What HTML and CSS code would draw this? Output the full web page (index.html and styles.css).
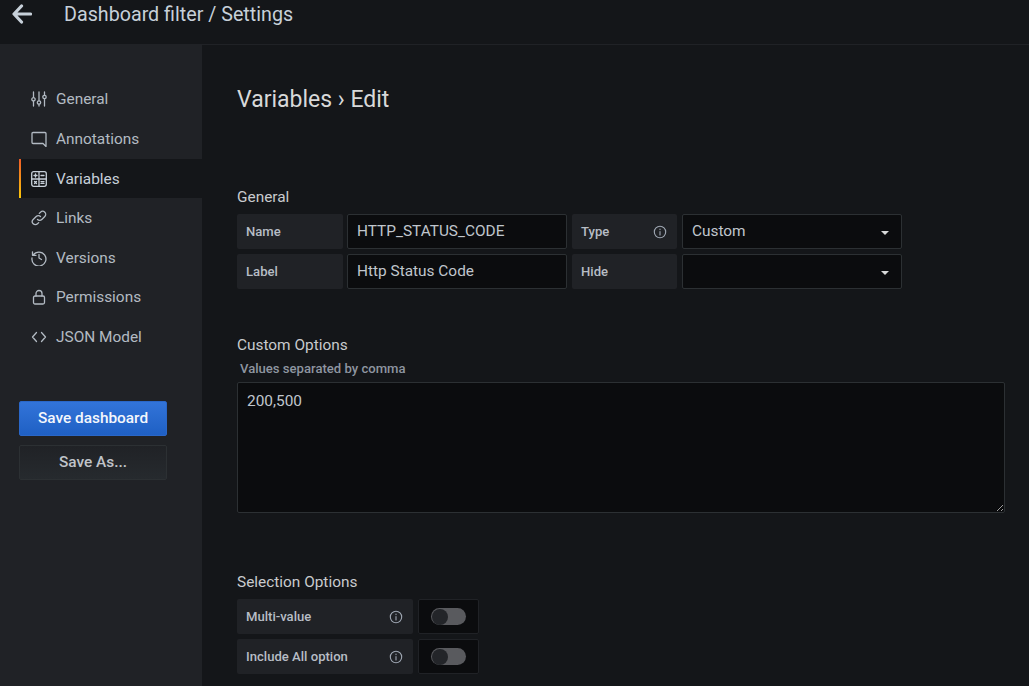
FILE: index.html
```html
<!DOCTYPE html>
<html lang="en">
<head>
<meta charset="utf-8">
<title>Dashboard filter / Settings</title>
<link rel="stylesheet" href="styles.css">
</head>
<body>
<header class="topbar">
  <svg class="back" viewBox="0 0 20 20" width="20" height="20"><path d="M18.500 10H3M9.500 2 2 10l7.500 8" fill="none" stroke="#c7d0d9" stroke-width="3.200" stroke-linecap="round" stroke-linejoin="round"/></svg>
  <h1 class="crumb">Dashboard filter / Settings</h1>
</header>
<div class="layout">
  <aside class="sidebar">
    <nav class="nav">
      <a class="nav-item"><svg class="nav-icon" viewBox="0 0 16 16"><path d="M2.500 1v5M2.500 10.500V15M8 1v8.500M8 13.500V15M13.500 1v3M13.500 8v7" /><circle cx="2.500" cy="8.300" r="1.700"/><circle cx="8" cy="11.500" r="1.700"/><circle cx="13.500" cy="6" r="1.700"/></svg>General</a>
      <a class="nav-item"><svg class="nav-icon" viewBox="0 0 16 16"><path d="M2 1.500h12a1 1 0 0 1 1 1v13l-3-3H2a1 1 0 0 1-1-1v-9a1 1 0 0 1 1-1z"/></svg>Annotations</a>
      <a class="nav-item active"><svg class="nav-icon" viewBox="0 0 16 16"><rect x=".7" y=".7" width="14.600" height="14.600" rx="2"/><path d="M8 1v14M1 8h14M3 4.500h3M4.500 3v3M10 4.500h3M3.500 10.500l2 2M5.500 10.500l-2 2M10 10.600h3M10 12.400h3"/></svg>Variables</a>
      <a class="nav-item"><svg class="nav-icon" viewBox="0 0 16 16"><path d="M6.500 9.500a3 3 0 0 0 4.300 0l3-3a3 3 0 0 0-4.300-4.300L8.300 3.400"/><path d="M9.500 6.500a3 3 0 0 0-4.300 0l-3 3a3 3 0 0 0 4.300 4.300l1.200-1.200"/></svg>Links</a>
      <a class="nav-item"><svg class="nav-icon" viewBox="0 0 16 16"><path d="M2.200 5A7 7 0 1 1 1 8M1.500 1.800V5.300H5M8 4.500V8l2.500 1.500"/></svg>Versions</a>
      <a class="nav-item"><svg class="nav-icon" viewBox="0 0 16 16"><rect x="2.500" y="7" width="11" height="8" rx="1.500"/><path d="M5 7V4.500a3 3 0 0 1 6 0V7"/></svg>Permissions</a>
      <a class="nav-item"><svg class="nav-icon" viewBox="0 0 16 16"><path d="M5.500 3.500 1.500 8l4 4.500M10.500 3.500l4 4.500-4 4.500"/></svg>JSON Model</a>
    </nav>
    <div class="actions">
      <button class="btn primary">Save dashboard</button>
      <button class="btn secondary">Save As...</button>
    </div>
  </aside>
  <main class="content">
    <h2 class="title">Variables › Edit</h2>

    <h3 class="section first">General</h3>
    <div class="rows">
      <div class="row">
        <div class="label w-name">Name</div>
        <div class="field w-input">HTTP_STATUS_CODE</div>
        <div class="label w-type">Type<svg class="info" viewBox="0 0 14 14"><circle cx="7" cy="7" r="5.700"/><path d="M7 6.500v3.500M7 4v.6"/></svg></div>
        <div class="field w-select">Custom<span class="caret"></span></div>
      </div>
      <div class="row">
        <div class="label w-name">Label</div>
        <div class="field w-input">Http Status Code</div>
        <div class="label w-type">Hide</div>
        <div class="field w-select"><span class="caret"></span></div>
      </div>
    </div>

    <h3 class="section custom">Custom Options</h3>
    <div class="hint">Values separated by comma</div>
    <textarea class="area" aria-label="Values separated by comma">200,500</textarea>

    <h3 class="section selection">Selection Options</h3>
    <div class="rows">
      <div class="row">
        <div class="label w-switch-label">Multi-value<svg class="info" viewBox="0 0 14 14"><circle cx="7" cy="7" r="5.700"/><path d="M7 6.500v3.500M7 4v.6"/></svg></div>
        <div class="switch-box"><span class="switch"><span class="knob"></span></span></div>
      </div>
      <div class="row">
        <div class="label w-switch-label">Include All option<svg class="info" viewBox="0 0 14 14"><circle cx="7" cy="7" r="5.700"/><path d="M7 6.500v3.500M7 4v.6"/></svg></div>
        <div class="switch-box"><span class="switch"><span class="knob"></span></span></div>
      </div>
    </div>
  </main>
</div>
</body>
</html>
```
FILE: styles.css
```css
* { box-sizing: border-box; }
html, body { margin: 0; height: 100%; overflow: hidden; }
body {
  background: #141619;
  color: #ccccdc;
  font-family: Roboto, "Liberation Sans", sans-serif;
  font-size: 14px;
}
.topbar {
  height: 45px;
  border-bottom: 1px solid #202226;
  display: flex;
  align-items: flex-start;
  padding: 4px 0 0 12px;
}
.back { flex: none; }
.crumb {
  margin: -2px 0 0 32px;
  font-size: 19.700px;
  line-height: 26px;
  font-weight: 400;
  color: #c7d0d9;
}
.layout { display: flex; height: 641px; }
.sidebar {
  width: 202px;
  flex: none;
  background: #202226;
  padding: 34.600px 0 0 19px;
}
.nav { display: flex; flex-direction: column; }
.nav-item {
  height: 39.6px;
  display: flex;
  align-items: center;
  gap: 9px;
  padding-left: 12px;
  font-size: 15.400px;
  color: #c7d0d9;
  opacity: .88;
}
.nav-item.active {
  background: #141619;
  opacity: 1;
  border-left: 2px solid;
  border-image: linear-gradient(#f05a28, #fbca0a) 1;
  padding-left: 10px;
}
.nav-icon {
  width: 16px;
  height: 16px;
  flex: none;
  fill: none;
  stroke: #c7d0d9;
  stroke-width: 1.300;
  stroke-linecap: round;
  stroke-linejoin: round;
}
.actions {
  display: flex;
  flex-direction: column;
  gap: 9px;
  margin-top: 44.400px;
  width: 148px;
}
.btn {
  height: 35px;
  border-radius: 2px;
  font: 500 15.400px Roboto, sans-serif;
  padding: 0 0 2px;
}
.primary {
  background: linear-gradient(#3274d9, #1f60c4);
  border: 1px solid #2a67c8;
  color: #f4f7fc;
}
.secondary {
  background: linear-gradient(#202226, #262a2e);
  border: 1px solid #2c3033;
  color: #c0c4c9;
}
.content { flex: 1; padding: 39px 24px 0 35px; min-width: 0; }
.title {
  margin: 0;
  font-size: 23px;
  line-height: 32px;
  font-weight: 400;
  color: #d8d9da;
}
.section {
  margin: 0;
  font-size: 15.400px;
  line-height: 20px;
  font-weight: 400;
  color: #c9cbce;
}
.section.first { margin-top: 71px; margin-bottom: 7px; }
.section.custom { margin-top: 46px; }
.section.selection { margin-top: 59px; margin-bottom: 7px; }
.rows { display: flex; flex-direction: column; gap: 5px; }
.row { display: flex; gap: 5px; height: 35px; }
.label {
  display: flex;
  align-items: center;
  justify-content: space-between;
  padding: 0 10px 0 9px;
  background: #202226;
  border-radius: 2px;
  font-size: 13.100px;
  font-weight: 500;
  color: #b7bdc5;
}
.w-name { width: 106px; margin-right: -1px; }
.w-type { width: 105px; }
.w-switch-label { width: 176px; }
.field {
  display: flex;
  align-items: center;
  justify-content: space-between;
  background: #0b0c0e;
  border: 1px solid #2c3033;
  border-radius: 2px;
  padding: 0 14px 1px 9px;
  font-size: 15.400px;
  color: #c0c6cd;
}
.w-input { width: 220px; }
.w-select { width: 220px; padding-right: 12px; }
.caret {
  margin-left: auto;
  width: 0;
  height: 0;
  border: 4px solid transparent;
  border-top: 4px solid #d8d9da;
  border-bottom: 0;
  margin-top: 3px;
}
.info {
  width: 14px;
  height: 14px;
  fill: none;
  stroke: #9fa7b3;
  stroke-width: 1.100;
  stroke-linecap: round;
}
.hint {
  margin: 6px 0 5px 3px;
  font-size: 13.100px;
  line-height: 16px;
  font-weight: 500;
  color: #8e95a0;
}
.area {
  display: block;
  width: 100%;
  height: 131px;
  background: #0b0c0e;
  border: 1px solid #2c3033;
  border-radius: 2px;
  padding: 8px 9px;
  font: 15.400px/20px Roboto, sans-serif;
  color: #c0c6cd;
  margin: 0;
}
.switch-box {
  width: 61px;
  background: #0b0c0e;
  border: 1px solid #202226;
  border-radius: 2px;
  display: flex;
  align-items: center;
  justify-content: center;
}
.switch {
  width: 35px;
  height: 17px;
  border-radius: 9px;
  background: #595a5e;
  display: block;
  padding: .5px;
}
.knob {
  display: block;
  width: 16px;
  height: 16px;
  border-radius: 50%;
  background: #232529;
}
```
